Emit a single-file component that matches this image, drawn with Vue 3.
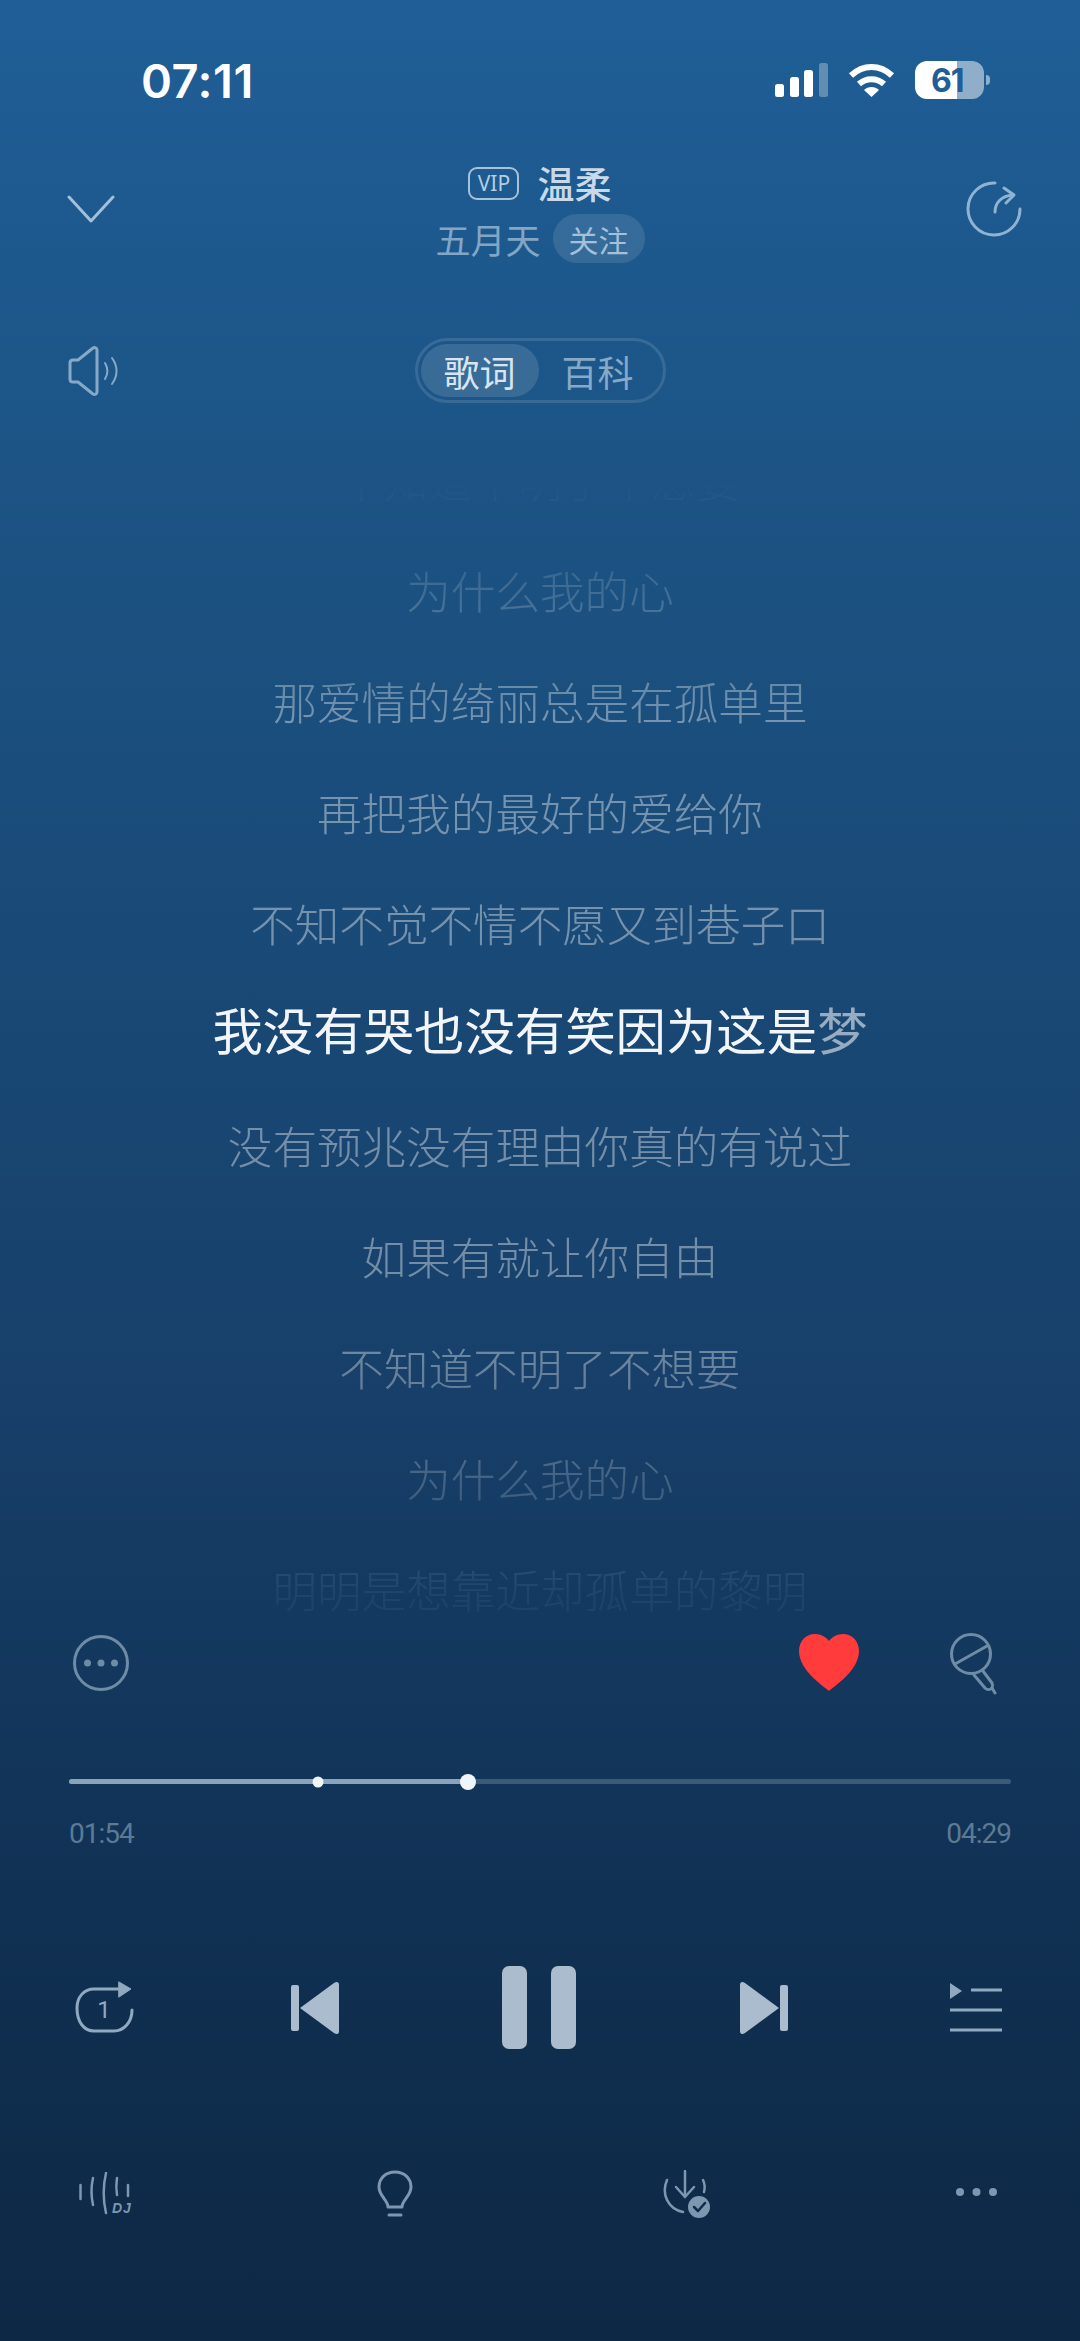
<script setup>
const lyrics = [
  '不知道不明了不想要',
  '为什么我的心',
  '那爱情的绮丽总是在孤单里',
  '再把我的最好的爱给你',
  '不知不觉不情不愿又到巷子口',
  { sung: '我没有哭也没有笑因为这是', rest: '梦' },
  '没有预兆没有理由你真的有说过',
  '如果有就让你自由',
  '不知道不明了不想要',
  '为什么我的心',
  '明明是想靠近却孤单的黎明',
]

const current = 114
const total = 269
const marker = 71

const pct = (sec) => (sec / total) * 100 + '%'
</script>

<template>
  <div class="player">
    <div class="status">
      <span class="time">07:11</span>
      <div class="status-icons">
        <svg class="signal" width="53" height="34" viewBox="0 0 53 34" fill="#fff">
          <rect x="0" y="21" width="9" height="13" rx="2.5" />
          <rect x="15" y="14" width="9" height="20" rx="2.5" />
          <rect x="29" y="7" width="9" height="27" rx="2.5" />
          <rect x="44" y="0" width="9" height="34" rx="2.5" opacity=".3" />
        </svg>
        <svg class="wifi" width="47" height="34" viewBox="0 0 47 34" fill="none" stroke="#fff" stroke-width="6">
          <path d="M3 12.5C15 1 32 1 44 12.5" />
          <path d="M11 21C18 14.5 29 14.5 36 21" />
          <path d="M23.5 34L16 27C20 23 27 23 31 27Z" fill="#fff" stroke="none" />
        </svg>
        <div class="battery"><span>61</span></div>
        <span class="battery-nub"></span>
      </div>
    </div>

    <header class="header">
      <svg class="chevron" width="48" height="28" viewBox="0 0 48 28" fill="none" stroke="#a3c0da" stroke-width="3" stroke-linecap="round" stroke-linejoin="round">
        <path d="M2 2L24 26L46 2" />
      </svg>
      <div class="song">
        <div class="song-title">
          <span class="vip">VIP</span>
          <span class="name">温柔</span>
        </div>
        <div class="song-artist">
          <span class="artist">五月天</span>
          <span class="follow">关注</span>
        </div>
      </div>
      <svg class="share" width="56" height="56" viewBox="0 0 56 56" fill="none" stroke="#8fb3d3" stroke-width="3" stroke-linecap="round" stroke-linejoin="round">
        <path d="M29 2A26 26 0 1 0 54 28" />
        <path d="M29 31C29 22 35 15 47 14" />
        <path d="M38 7L48 14L40 22" />
      </svg>
    </header>

    <div class="tab-row">
      <svg class="speaker" width="52" height="50" viewBox="0 0 52 50" fill="none" stroke="#86a9c9" stroke-width="3" stroke-linecap="round" stroke-linejoin="round">
        <path d="M2 17C2 15 3 14 5 14H10L25 2C27 1 29 2 29 4V46C29 48 27 49 25 48L10 36H5C3 36 2 35 2 33Z" />
        <path d="M37 17C40 22 40 28 37 33" stroke-width="2" />
        <path d="M44 12C50 20 50 30 44 38" stroke-width="2" />
      </svg>
      <div class="tabs">
        <span class="tab active">歌词</span>
        <span class="tab">百科</span>
      </div>
    </div>

    <div class="lyrics">
      <p v-for="(line, i) in lyrics" :key="i" class="line" :class="{ current: line.sung }">
        <template v-if="line.sung">{{ line.sung }}<span class="rest">{{ line.rest }}</span></template>
        <template v-else>{{ line }}</template>
      </p>
    </div>

    <div class="actions">
      <svg width="58" height="58" viewBox="0 0 58 58" fill="none" stroke="#6f8ca6" stroke-width="3">
        <circle cx="29" cy="29" r="26.5" />
        <g fill="#6f8ca6" stroke="none">
          <circle cx="15.5" cy="29" r="3.5" />
          <circle cx="29" cy="29" r="3.5" />
          <circle cx="42.5" cy="29" r="3.5" />
        </g>
      </svg>
      <div class="actions-right">
        <svg width="60" height="57" viewBox="0 0 60 57">
          <path d="M30 57C26 53 0 37 0 17C0 7 7 0 16 0C22 0 27 3 30 7C33 3 38 0 44 0C53 0 60 7 60 17C60 37 34 53 30 57Z" fill="#ff3b3b" />
        </svg>
        <svg class="mic" width="50" height="62" viewBox="0 0 50 62" fill="none" stroke="#6f8ca6" stroke-width="3" stroke-linecap="round" stroke-linejoin="round">
          <circle cx="22" cy="21" r="19.5" />
          <path d="M6 31L38 13" />
          <path d="M25 42L36 55C38 57 41 57 43 55C44 53 44 52 43 50L34 38" />
          <path d="M43 55L46 60" />
        </svg>
      </div>
    </div>

    <div class="progress">
      <div class="track">
        <div class="track-fill" :style="{ width: pct(current) }"></div>
        <span class="dot" :style="{ left: pct(marker) }"></span>
        <span class="knob" :style="{ left: pct(current) }"></span>
      </div>
      <div class="times">
        <span>01:54</span>
        <span>04:29</span>
      </div>
    </div>

    <div class="controls">
      <svg class="c-repeat" width="60" height="54" viewBox="0 0 60 54" fill="none" stroke="#8fa9c0" stroke-width="3" stroke-linecap="round">
        <path d="M45 8H19C9 8 2 16 2 27C2 41 9 50 19 50H39C49 50 57 41 57 29" />
        <path d="M44 1L56 8L44 16Z" fill="#8fa9c0" stroke="#8fa9c0" stroke-linejoin="round" stroke-width="1" />
        <text x="29" y="37" class="repeat-num">1</text>
      </svg>
      <svg class="c-prev" width="48" height="54" viewBox="0 0 48 54" fill="#aabccd">
        <rect x="0" y="4" width="8" height="46" rx="2" />
        <path d="M9 27L43 2C46 0 48 1 48 4V50C48 53 46 54 43 52Z" />
      </svg>
      <div class="c-pause">
        <span></span>
        <span></span>
      </div>
      <svg class="c-next" width="48" height="54" viewBox="0 0 48 54" fill="#aabccd">
        <rect x="40" y="4" width="8" height="46" rx="2" />
        <path d="M39 27L5 2C2 0 0 1 0 4V50C0 53 2 54 5 52Z" />
      </svg>
      <svg class="c-list" width="52" height="50" viewBox="0 0 52 50" fill="none" stroke="#8fa9c0" stroke-width="3">
        <path d="M0 0L12 8L0 16Z" fill="#8fa9c0" stroke="none" />
        <path d="M21 7H52M0 27H52M0 47H52" />
      </svg>
    </div>

    <div class="tools">
      <svg class="t-dj" width="56" height="46" viewBox="0 0 56 46" fill="none" stroke="#7d97b0" stroke-width="2.5" stroke-linecap="round">
        <path d="M1.5 13V27" />
        <path d="M14 6C12 15 12 24 14 33" />
        <path d="M27 1C24 14 24 28 27 41" />
        <path d="M38 6C37 12 37 17 38 23" />
        <path d="M49 13V24" />
        <text x="33" y="41" class="dj">DJ</text>
      </svg>
      <svg class="t-bulb" width="36" height="48" viewBox="0 0 36 48" fill="none" stroke="#7d97b0" stroke-width="3" stroke-linecap="round">
        <path d="M11 37C11 30 2 26 2 17C2 8 9 2 18 2C27 2 34 8 34 17C34 26 25 30 25 37Z" stroke-linejoin="round" />
        <path d="M12 45H24" />
      </svg>
      <svg class="t-down" width="50" height="48" viewBox="0 0 50 48" fill="none" stroke="#7d97b0" stroke-width="2.5" stroke-linecap="round">
        <path d="M23 1V26" />
        <path d="M14 17L23 27L32 17" />
        <path d="M5 10C-1 24 6 39 21 42" />
        <path d="M41 10C43 14 43 18 42 22" />
        <circle cx="37" cy="37" r="11" fill="#7d97b0" stroke="none" />
        <path d="M32 37L36 41L43 33" stroke="#0f2c4b" stroke-width="2.5" stroke-linejoin="round" />
      </svg>
      <svg class="t-more" width="41" height="8" viewBox="0 0 41 8" fill="#7d97b0">
        <circle cx="4" cy="4" r="4" />
        <circle cx="20.5" cy="4" r="4" />
        <circle cx="37" cy="4" r="4" />
      </svg>
    </div>
  </div>
</template>

<style>
html, body {
  margin: 0;
  background: #0d2946;
}
</style>

<style scoped>
.player {
  width: 1080px;
  height: 2341px;
  overflow: hidden;
  background: linear-gradient(180deg, #1f5e97 0%, #1c5485 20%, #173f69 60%, #12355a 75%, #0f2d4d 88%, #0d2845 100%);
  font-family: "Noto Sans CJK SC", "Noto Sans", sans-serif;
  color: #fff;
}

svg { display: block; flex: none; }

.status {
  height: 160px;
  display: flex;
  align-items: center;
  justify-content: space-between;
  padding: 0 90px 0 141px;
  box-sizing: border-box;
}
.time {
  font-family: Inter, sans-serif;
  font-weight: 600;
  font-size: 47px;
  letter-spacing: .5px;
}
.status-icons {
  display: flex;
  align-items: center;
}
.wifi { margin-left: 20px; }
.battery {
  margin-left: 20px;
  width: 69px;
  height: 38px;
  border-radius: 12px;
  background: linear-gradient(90deg, #fff 61%, rgba(255, 255, 255, .5) 61%);
  display: flex;
  align-items: center;
  padding-left: 16px;
  box-sizing: border-box;
  color: #1f5e97;
  font-family: Inter, sans-serif;
  font-weight: 700;
  font-size: 32px;
  letter-spacing: -1px;
}
.battery-nub {
  width: 4px;
  height: 10px;
  margin-left: 2px;
  border-radius: 0 5px 5px 0;
  background: rgba(255, 255, 255, .5);
}

.header {
  display: grid;
  grid-template-columns: 1fr auto 1fr;
  padding: 6px 58px 0;
  height: 103px;
  box-sizing: border-box;
}
.chevron {
  margin: 29px 0 0 9px;
}
.share {
  justify-self: end;
  margin-top: 15px;
}
.song {
  display: flex;
  flex-direction: column;
  align-items: center;
}
.song-title {
  height: 34px;
  display: flex;
  align-items: center;
  gap: 18px;
}
.vip {
  width: 51px;
  height: 33px;
  box-sizing: border-box;
  border: 2px solid #a5c2dc;
  border-radius: 9px;
  display: flex;
  align-items: center;
  justify-content: center;
  font-family: "Noto Sans", sans-serif;
  font-size: 21px;
  line-height: 1;
  color: #b4cde3;
}
.name {
  font-size: 37px;
  font-weight: 500;
  line-height: 1;
  color: #c8d9e9;
}
.song-artist {
  margin-top: 14px;
  height: 49px;
  display: flex;
  align-items: center;
  gap: 12px;
}
.artist {
  font-size: 35px;
  line-height: 1;
  color: #82a6c6;
}
.follow {
  width: 92px;
  height: 49px;
  border-radius: 25px;
  background: rgba(255, 255, 255, .11);
  display: flex;
  align-items: center;
  justify-content: center;
  font-size: 30px;
  line-height: 1;
  color: #a4c0da;
}

.tab-row {
  margin-top: 75px;
  display: grid;
  grid-template-columns: 1fr auto 1fr;
  align-items: center;
  padding: 0 68px;
}
.tabs {
  width: 251px;
  height: 65px;
  box-sizing: border-box;
  border: 3px solid rgba(255, 255, 255, .12);
  border-radius: 33px;
  padding: 3px;
  display: flex;
  align-items: center;
}
.tab {
  width: 118px;
  height: 53px;
  border-radius: 27px;
  display: flex;
  align-items: center;
  justify-content: center;
  font-size: 36px;
  line-height: 1;
  color: #86a9c9;
}
.tab.active {
  background: rgba(255, 255, 255, .13);
  color: #d8e5f0;
}

.lyrics {
  margin-top: 19px;
  height: 1200px;
  box-sizing: border-box;
  padding-top: 26px;
  overflow: hidden;
  display: flex;
  flex-direction: column;
  gap: 51px;
  -webkit-mask-image: linear-gradient(180deg, transparent 5%, rgba(0,0,0,.1) 7%, rgba(0,0,0,.42) 14.4%, #000 25%, #000 76%, rgba(0,0,0,.5) 88%, rgba(0,0,0,.12) 98%);
  mask-image: linear-gradient(180deg, transparent 5%, rgba(0,0,0,.1) 7%, rgba(0,0,0,.42) 14.4%, #000 25%, #000 76%, rgba(0,0,0,.5) 88%, rgba(0,0,0,.12) 98%);
}
.line {
  margin: 0;
  flex: none;
  height: 60px;
  display: flex;
  align-items: center;
  justify-content: center;
  font-size: 44.6px;
  font-weight: 300;
  white-space: pre;
  color: rgba(255, 255, 255, .4);
}
.line.current {
  margin: -5px 0 5px;
  font-size: 50.4px;
  font-weight: 400;
  color: #f2f6fa;
}
.rest { color: rgba(255, 255, 255, .55); }

.actions {
  margin-top: 12px;
  height: 60px;
  display: flex;
  align-items: flex-start;
  justify-content: space-between;
  padding: 0 81px 0 72px;
}
.actions-right {
  display: flex;
  gap: 90px;
}
.mic { margin-top: -1px; }

.progress {
  margin: 85px 69px 0;
}
.track {
  position: relative;
  height: 5px;
  border-radius: 3px;
  background: #3c5a78;
}
.track-fill {
  height: 100%;
  border-radius: 3px;
  background: #8ba3ba;
}
.dot, .knob {
  position: absolute;
  top: 50%;
  border-radius: 50%;
  transform: translate(-50%, -50%);
  background: #f0f5fa;
}
.dot { width: 11px; height: 11px; }
.knob { width: 16px; height: 16px; }
.times {
  margin-top: 35px;
  display: flex;
  justify-content: space-between;
  font-family: Roboto, sans-serif;
  font-size: 28px;
  line-height: 30px;
  letter-spacing: -1px;
  color: #5d7a95;
}

.controls {
  margin-top: 117px;
  height: 83px;
  display: flex;
  align-items: center;
}
.c-repeat { margin-left: 75px; }
.c-prev { margin-left: 156px; }
.c-pause {
  margin-left: 163px;
  display: flex;
  gap: 24px;
}
.c-pause span {
  width: 25px;
  height: 83px;
  border-radius: 7px;
  background: #aabccd;
}
.c-next { margin-left: 164px; }
.c-list { margin-left: 162px; }
.repeat-num {
  font-family: Roboto, sans-serif;
  font-size: 24px;
  text-anchor: middle;
  fill: #8fa9c0;
  stroke: none;
}

.tools {
  margin-top: 121px;
  height: 48px;
  display: flex;
  align-items: flex-start;
}
.dj {
  font-family: "Liberation Sans", sans-serif;
  font-style: italic;
  font-weight: 700;
  font-size: 14px;
  letter-spacing: 1px;
  fill: #7d97b0;
  stroke: none;
}
.t-dj { margin-left: 79px; margin-top: 2px; }
.t-bulb { margin-left: 242px; }
.t-down { margin-left: 249px; }
.t-more { margin-left: 244px; margin-top: 18px; }
</style>
